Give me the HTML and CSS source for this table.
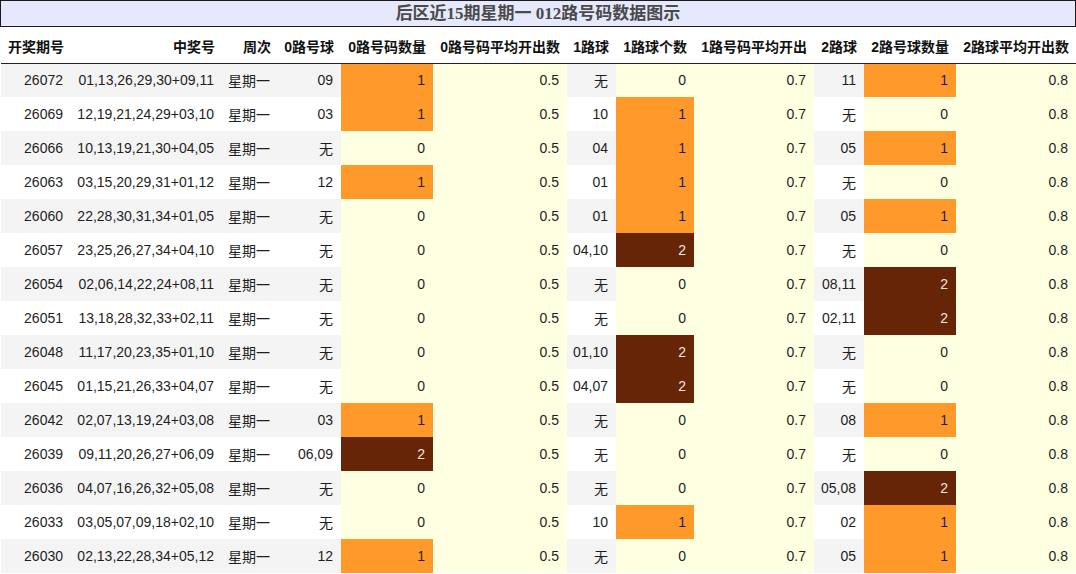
FILE: index.html
```html
<!DOCTYPE html>
<html>
<head>
<meta charset="utf-8">
<link rel="stylesheet" href="styles.css">
</head>
<body>
<div class="title">后区近15期星期一 012路号码数据图示</div>
<div class="wrap">
<table class="grid">
<colgroup>
<col class="w0"><col class="w1"><col class="w2"><col class="w3"><col class="w4"><col class="w5"><col class="w6"><col class="w7"><col class="w8"><col class="w9"><col class="w10"><col class="w11">
</colgroup>
<thead>
<tr><th class="left">开奖期号</th><th>中奖号</th><th>周次</th><th>0路号球</th><th>0路号码数量</th><th>0路号码平均开出数</th><th>1路球</th><th>1路球个数</th><th>1路号码平均开出</th><th>2路球</th><th>2路号球数量</th><th>2路球平均开出数</th></tr>
</thead>
<tbody>
<tr class="odd"><td>26072</td><td>01,13,26,29,30+09,11</td><td>星期一</td><td>09</td><td class="o">1</td><td class="y">0.5</td><td>无</td><td class="y">0</td><td class="y">0.7</td><td>11</td><td class="o">1</td><td class="y">0.8</td></tr>
<tr><td>26069</td><td>12,19,21,24,29+03,10</td><td>星期一</td><td>03</td><td class="o">1</td><td class="y">0.5</td><td>10</td><td class="o">1</td><td class="y">0.7</td><td>无</td><td class="y">0</td><td class="y">0.8</td></tr>
<tr class="odd"><td>26066</td><td>10,13,19,21,30+04,05</td><td>星期一</td><td>无</td><td class="y">0</td><td class="y">0.5</td><td>04</td><td class="o">1</td><td class="y">0.7</td><td>05</td><td class="o">1</td><td class="y">0.8</td></tr>
<tr><td>26063</td><td>03,15,20,29,31+01,12</td><td>星期一</td><td>12</td><td class="o">1</td><td class="y">0.5</td><td>01</td><td class="o">1</td><td class="y">0.7</td><td>无</td><td class="y">0</td><td class="y">0.8</td></tr>
<tr class="odd"><td>26060</td><td>22,28,30,31,34+01,05</td><td>星期一</td><td>无</td><td class="y">0</td><td class="y">0.5</td><td>01</td><td class="o">1</td><td class="y">0.7</td><td>05</td><td class="o">1</td><td class="y">0.8</td></tr>
<tr><td>26057</td><td>23,25,26,27,34+04,10</td><td>星期一</td><td>无</td><td class="y">0</td><td class="y">0.5</td><td>04,10</td><td class="b">2</td><td class="y">0.7</td><td>无</td><td class="y">0</td><td class="y">0.8</td></tr>
<tr class="odd"><td>26054</td><td>02,06,14,22,24+08,11</td><td>星期一</td><td>无</td><td class="y">0</td><td class="y">0.5</td><td>无</td><td class="y">0</td><td class="y">0.7</td><td>08,11</td><td class="b">2</td><td class="y">0.8</td></tr>
<tr><td>26051</td><td>13,18,28,32,33+02,11</td><td>星期一</td><td>无</td><td class="y">0</td><td class="y">0.5</td><td>无</td><td class="y">0</td><td class="y">0.7</td><td>02,11</td><td class="b">2</td><td class="y">0.8</td></tr>
<tr class="odd"><td>26048</td><td>11,17,20,23,35+01,10</td><td>星期一</td><td>无</td><td class="y">0</td><td class="y">0.5</td><td>01,10</td><td class="b">2</td><td class="y">0.7</td><td>无</td><td class="y">0</td><td class="y">0.8</td></tr>
<tr><td>26045</td><td>01,15,21,26,33+04,07</td><td>星期一</td><td>无</td><td class="y">0</td><td class="y">0.5</td><td>04,07</td><td class="b">2</td><td class="y">0.7</td><td>无</td><td class="y">0</td><td class="y">0.8</td></tr>
<tr class="odd"><td>26042</td><td>02,07,13,19,24+03,08</td><td>星期一</td><td>03</td><td class="o">1</td><td class="y">0.5</td><td>无</td><td class="y">0</td><td class="y">0.7</td><td>08</td><td class="o">1</td><td class="y">0.8</td></tr>
<tr><td>26039</td><td>09,11,20,26,27+06,09</td><td>星期一</td><td>06,09</td><td class="b">2</td><td class="y">0.5</td><td>无</td><td class="y">0</td><td class="y">0.7</td><td>无</td><td class="y">0</td><td class="y">0.8</td></tr>
<tr class="odd"><td>26036</td><td>04,07,16,26,32+05,08</td><td>星期一</td><td>无</td><td class="y">0</td><td class="y">0.5</td><td>无</td><td class="y">0</td><td class="y">0.7</td><td>05,08</td><td class="b">2</td><td class="y">0.8</td></tr>
<tr><td>26033</td><td>03,05,07,09,18+02,10</td><td>星期一</td><td>无</td><td class="y">0</td><td class="y">0.5</td><td>10</td><td class="o">1</td><td class="y">0.7</td><td>02</td><td class="o">1</td><td class="y">0.8</td></tr>
<tr class="odd"><td>26030</td><td>02,13,22,28,34+05,12</td><td>星期一</td><td>12</td><td class="o">1</td><td class="y">0.5</td><td>无</td><td class="y">0</td><td class="y">0.7</td><td>05</td><td class="o">1</td><td class="y">0.8</td></tr>
</tbody>
</table>
</div>
</body>
</html>
```
FILE: styles.css
```css
html, body {
  margin: 0;
  padding: 0;
  background: #ffffff;
}
body {
  width: 1076px;
  font-family: "Liberation Sans", "Noto Sans CJK SC", sans-serif;
  font-size: 14px;
  color: #1e1e1e;
}
.title {
  box-sizing: border-box;
  height: 27px;
  border: 1px solid #1a1a1a;
  background: #e6e8fc;
  color: #4a4a4a;
  font-family: "Liberation Serif", "Noto Sans CJK SC", serif;
  font-weight: bold;
  font-size: 17px;
  line-height: 25px;
  text-align: center;
}
.wrap {
  padding-left: 1px;
}
.grid {
  border-collapse: collapse;
  table-layout: fixed;
  width: 1075px;
}
.w0 { width: 70px; }
.w1 { width: 151px; }
.w2 { width: 56px; }
.w3 { width: 63px; }
.w4 { width: 92px; }
.w5 { width: 134px; }
.w6 { width: 49px; }
.w7 { width: 78px; }
.w8 { width: 120px; }
.w9 { width: 50px; }
.w10 { width: 92px; }
.w11 { width: 120px; }
.grid th {
  height: 36px;
  padding: 3px 7px 0 0;
  box-sizing: border-box;
  font-weight: bold;
  font-size: 14px;
  color: #111;
  text-align: right;
  white-space: nowrap;
  border-bottom: 1px solid #222;
  background: #fff;
}
.grid th.left {
  text-align: left;
  padding-left: 7px;
}
.grid td {
  height: 34px;
  box-sizing: border-box;
  padding: 0 8px 0 0;
  text-align: right;
  white-space: nowrap;
  background: #ffffff;
}
.grid tr.odd td {
  background: #f4f4f4;
}
.grid td.y,
.grid tr.odd td.y {
  background: #ffffe2;
}
.grid td.o,
.grid tr.odd td.o {
  background: #fe992a;
  color: #1e1e1e;
}
.grid td.b,
.grid tr.odd td.b {
  background: #652506;
  color: #f0e6e0;
}
```
